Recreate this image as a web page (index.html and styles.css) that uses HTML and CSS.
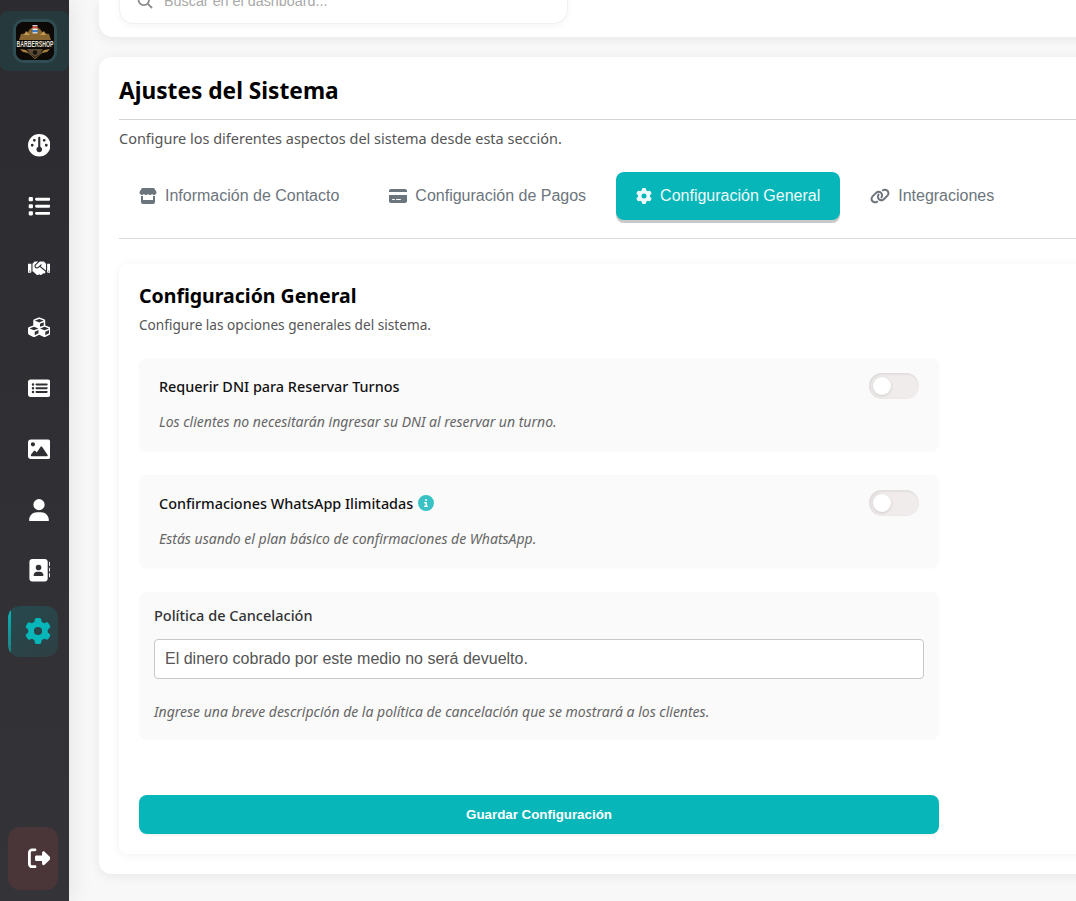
FILE: index.html
```html
<!DOCTYPE html>
<html lang="es">
<head>
<meta charset="utf-8">
<title>Ajustes del Sistema</title>
<link rel="stylesheet" href="styles.css">
</head>
<body>
<div class="app">
  <aside class="sidebar">
    <div class="brand">
      <div class="logo">
        <svg viewBox="0 0 38 38" width="38" height="38">
          <rect width="38" height="38" fill="#0c0906"/>
          <path d="M14 7l5-3 5 3 3 4 6 1 2 6h-32l2-6 6-1z" fill="#8a6631"/>
          <path d="M4 27l6 1 5 5 4 3 4-3 5-5 6-1-3 3-5 1-7 6-7-6-5-1z" fill="#a57f40"/>
          <path d="M11 27h16l-3 5-5 3-5-3z" fill="#5b4a36"/>
          <path d="M10 9l4 4h-6zM28 9l-4 4h6z" fill="#c39a54"/>
          <rect x="16.500" y="3" width="5" height="1.500" fill="#cfcfcf"/>
          <rect x="16.500" y="4.500" width="5" height="2" fill="#d8452f"/>
          <rect x="16.500" y="6.500" width="5" height="1.500" fill="#eeeeee"/>
          <rect x="16.500" y="8" width="5" height="2" fill="#3c7fd0"/>
          <rect x="16.500" y="10" width="5" height="1.500" fill="#cfcfcf"/>
          <text class="logo-text" text-anchor="middle" transform="translate(19 24.500) scale(1 1.800)">BARBERSHOP</text>
          <circle cx="19" cy="30.500" r="2.200" fill="#15110c"/>
        </svg>
      </div>
    </div>
    <nav class="nav">
      <a class="nav-item"><svg class="ico" viewBox="0 0 512 512"><path d="M0 256a256 256 0 1 1 512 0A256 256 0 1 1 0 256zm320 96c0-26.900-16.500-49.900-40-59.300V88c0-13.300-10.700-24-24-24s-24 10.700-24 24V292.700c-23.500 9.500-40 32.500-40 59.300c0 35.300 28.700 64 64 64s64-28.700 64-64zM144 176a32 32 0 1 0 0-64 32 32 0 1 0 0 64zm-16 80a32 32 0 1 0 -64 0 32 32 0 1 0 64 0zm288 32a32 32 0 1 0 0-64 32 32 0 1 0 0 64zM400 144a32 32 0 1 0 -64 0 32 32 0 1 0 64 0z"/></svg></a>
      <a class="nav-item"><svg class="ico" viewBox="0 0 512 512"><path d="M40 48C26.700 48 16 58.700 16 72v48c0 13.300 10.700 24 24 24H88c13.300 0 24-10.700 24-24V72c0-13.300-10.700-24-24-24H40zM192 64c-17.700 0-32 14.300-32 32s14.300 32 32 32H480c17.700 0 32-14.300 32-32s-14.300-32-32-32H192zm0 160c-17.700 0-32 14.300-32 32s14.300 32 32 32H480c17.700 0 32-14.300 32-32s-14.300-32-32-32H192zm0 160c-17.700 0-32 14.300-32 32s14.300 32 32 32H480c17.700 0 32-14.300 32-32s-14.300-32-32-32H192zM16 232v48c0 13.300 10.700 24 24 24H88c13.300 0 24-10.700 24-24V232c0-13.300-10.700-24-24-24H40c-13.300 0-24 10.700-24 24zM40 368c-13.300 0-24 10.700-24 24v48c0 13.300 10.700 24 24 24H88c13.300 0 24-10.700 24-24V392c0-13.300-10.700-24-24-24H40z"/></svg></a>
      <a class="nav-item"><svg class="ico ico-low" viewBox="0 0 640 512"><path d="M434.700 64h-85.900c-8 0-15.700 3-21.600 8.400l-98.300 90c-.1.100-.2.300-.3.400-16.600 15.600-16.300 40.500-2.100 56 12.700 13.900 39.400 17.600 56.100 2.700.1-.1.300-.1.400-.2l79.900-73.200c6.500-5.900 16.700-5.500 22.600 1 6 6.500 5.500 16.600-1 22.600l-26.100 23.900L504 313.800c2.900 2.400 5.500 5 7.900 7.700V128l-54.600-54.600c-5.900-6-14.100-9.400-22.600-9.400zM544 128.200v223.900c0 17.700 14.300 32 32 32h64V128.200h-96zm48 223.900c-8.800 0-16-7.200-16-16s7.200-16 16-16 16 7.200 16 16-7.200 16-16 16zM0 384h64c17.700 0 32-14.300 32-32V128.200H0V384zm48-63.900c8.800 0 16 7.200 16 16s-7.200 16-16 16-16-7.200-16-16c0-8.900 7.200-16 16-16zm435.900 18.600L334.600 217.500l-30 27.500c-29.700 27.100-75.200 24.500-101.700-4.400-26.900-29.400-24.800-74.900 4.400-101.700L289.100 64h-83.800c-8.500 0-16.600 3.400-22.600 9.400L128 128v223.900h18.300l90.500 81.900c27.400 22.300 67.700 18.100 90-9.300l.2-.2 17.900 15.500c15.900 13 39.400 10.500 52.300-5.400l31.400-38.600 5.400 4.400c13.700 11.100 33.900 9.100 45-4.700l9.500-11.700c11.200-13.800 9.100-33.900-4.600-45.100z"/></svg></a>
      <a class="nav-item"><svg class="ico" viewBox="0 0 512 512"><path d="M488.600 250.200L392 214V105.500c0-15-9.300-28.400-23.400-33.700l-100-37.500c-8.100-3.100-17.100-3.100-25.300 0l-100 37.500c-14.100 5.300-23.400 18.700-23.400 33.700V214l-96.600 36.200C9.300 255.500 0 268.900 0 283.900V394c0 13.600 7.700 26.100 19.900 32.200l100 50c10.100 5.100 22.100 5.100 32.200 0l103.900-52 103.900 52c10.100 5.100 22.100 5.100 32.200 0l100-50c12.200-6.100 19.900-18.600 19.900-32.200V283.900c0-15-9.300-28.400-23.400-33.700zM358 214.800l-85 31.900v-68.200l85-37v73.300zM154 104.100l102-38.200 102 38.200v.6l-102 41.400-102-41.400v-.6zm84 291.100l-85 42.500v-79.100l85-38.800v75.400zm0-112l-102 41.400-102-41.400v-.6l102-38.200 102 38.200v.6zm240 112l-85 42.500v-79.100l85-38.800v75.400zm0-112l-102 41.400-102-41.400v-.6l102-38.200 102 38.200v.6z"/></svg></a>
      <a class="nav-item"><svg class="ico" viewBox="0 0 576 512"><path d="M64 32C28.700 32 0 60.700 0 96V416c0 35.300 28.700 64 64 64H512c35.300 0 64-28.700 64-64V96c0-35.300-28.700-64-64-64H64zM96 160a32 32 0 1 1 64 0a32 32 0 1 1 -64 0zM96 256a32 32 0 1 1 64 0a32 32 0 1 1 -64 0zM96 352a32 32 0 1 1 64 0a32 32 0 1 1 -64 0zM216 136H480c13.300 0 24 10.700 24 24s-10.700 24-24 24H216c-13.300 0-24-10.700-24-24s10.700-24 24-24zM216 232H480c13.300 0 24 10.700 24 24s-10.700 24-24 24H216c-13.300 0-24-10.700-24-24s10.700-24 24-24zM216 328H480c13.300 0 24 10.700 24 24s-10.700 24-24 24H216c-13.300 0-24-10.700-24-24s10.700-24 24-24z"/></svg></a>
      <a class="nav-item"><svg class="ico" viewBox="0 0 512 512"><path d="M0 96C0 60.700 28.700 32 64 32H448c35.300 0 64 28.700 64 64V416c0 35.300-28.700 64-64 64H64c-35.300 0-64-28.700-64-64V96zM323.800 202.500c-4.500-6.600-11.900-10.500-19.800-10.500s-15.400 3.900-19.800 10.500l-87 127.600L170.700 297c-4.600-5.700-11.500-9-18.700-9s-14.200 3.300-18.700 9l-64 80c-5.800 7.200-6.900 17.100-2.900 25.400s12.400 13.600 21.600 13.600h96 32H424c8.900 0 17.100-4.900 21.200-12.800s3.600-17.400-1.400-24.700l-120-176zM112 192a48 48 0 1 0 0-96 48 48 0 1 0 0 96z"/></svg></a>
      <a class="nav-item"><svg class="ico ico-narrow" viewBox="0 0 448 512"><path d="M224 256A128 128 0 1 0 224 0a128 128 0 1 0 0 256zm-45.700 48C79.800 304 0 383.800 0 482.300C0 498.700 13.300 512 29.700 512H418.300c16.400 0 29.700-13.300 29.700-29.700C448 383.800 368.200 304 269.700 304H178.300z"/></svg></a>
      <a class="nav-item"><svg class="ico" viewBox="0 0 512 512"><path d="M96 0C60.700 0 32 28.700 32 64V448c0 35.300 28.700 64 64 64H384c35.300 0 64-28.700 64-64V64c0-35.300-28.700-64-64-64H96zM208 288h64c44.200 0 80 35.800 80 80c0 8.800-7.200 16-16 16H144c-8.800 0-16-7.200-16-16c0-44.200 35.800-80 80-80zm-32-96a64 64 0 1 1 128 0 64 64 0 1 1 -128 0zM512 80c0-8.800-7.200-16-16-16s-16 7.200-16 16v64c0 8.800 7.200 16 16 16s16-7.200 16-16V80zM496 192c-8.800 0-16 7.200-16 16v64c0 8.800 7.200 16 16 16s16-7.200 16-16V208c0-8.800-7.200-16-16-16zm16 144c0-8.800-7.200-16-16-16s-16 7.200-16 16v64c0 8.800 7.200 16 16 16s16-7.200 16-16V336z"/></svg></a>
      <a class="nav-item active"><svg class="ico ico-gear" viewBox="0 0 512 512"><path d="M495.900 166.600c3.200 8.700 .5 18.400-6.400 24.600l-43.300 39.400c1.100 8.300 1.700 16.800 1.700 25.400s-.6 17.100-1.700 25.400l43.300 39.400c6.900 6.200 9.600 15.900 6.400 24.600c-4.400 11.900-9.700 23.300-15.800 34.300l-4.700 8.100c-6.600 11-14 21.400-22.100 31.200c-5.900 7.200-15.700 9.600-24.500 6.800l-55.700-17.700c-13.400 10.300-28.200 18.900-44 25.400l-12.500 57.100c-2 9.100-9 16.300-18.200 17.800c-13.800 2.300-28 3.500-42.500 3.500s-28.700-1.200-42.500-3.500c-9.200-1.500-16.200-8.700-18.200-17.800l-12.500-57.100c-15.800-6.500-30.600-15.100-44-25.400L83.100 425.900c-8.800 2.800-18.600 .3-24.500-6.800c-8.100-9.800-15.500-20.200-22.100-31.200l-4.700-8.100c-6.100-11-11.400-22.400-15.800-34.300c-3.200-8.700-.5-18.400 6.400-24.600l43.300-39.400C64.600 273.100 64 264.600 64 256s.6-17.100 1.700-25.400L22.400 191.200c-6.900-6.200-9.600-15.900-6.400-24.600c4.400-11.900 9.700-23.300 15.800-34.300l4.700-8.100c6.600-11 14-21.400 22.100-31.200c5.900-7.200 15.700-9.600 24.500-6.800l55.700 17.700c13.400-10.300 28.200-18.900 44-25.400l12.500-57.100c2-9.100 9-16.300 18.200-17.800C227.300 1.200 241.500 0 256 0s28.700 1.200 42.500 3.500c9.200 1.500 16.200 8.700 18.200 17.800l12.500 57.100c15.800 6.500 30.600 15.100 44 25.400l55.700-17.700c8.800-2.800 18.600-.3 24.500 6.800c8.100 9.800 15.500 20.200 22.100 31.200l4.700 8.100c6.100 11 11.400 22.400 15.800 34.300zM256 336a80 80 0 1 0 0-160 80 80 0 1 0 0 160z"/></svg></a>
    </nav>
    <a class="logout"><svg class="ico" viewBox="0 0 512 512"><path d="M377.900 105.900L500.700 228.700c7.200 7.200 11.300 17.100 11.300 27.300s-4.100 20.100-11.300 27.300L377.900 406.100c-6.400 6.400-15 9.900-24 9.900c-18.700 0-33.900-15.200-33.900-33.900l0-62.100-128 0c-17.700 0-32-14.300-32-32l0-64c0-17.700 14.300-32 32-32l128 0 0-62.100c0-18.700 15.200-33.900 33.900-33.900c9 0 17.600 3.600 24 9.900zM160 96L96 96c-17.700 0-32 14.300-32 32l0 256c0 17.700 14.300 32 32 32l64 0c17.700 0 32 14.300 32 32s-14.300 32-32 32l-64 0c-53 0-96-43-96-96L0 128C0 75 43 32 96 32l64 0c17.700 0 32 14.300 32 32s-14.300 32-32 32z"/></svg></a>
  </aside>

  <main class="main">
    <header class="topbar">
      <div class="search">
        <svg class="search-ico" viewBox="0 0 16 16"><circle cx="6.800" cy="6.800" r="5.300"/><path d="M10.800 10.800L15 15"/></svg>
        <span class="search-ph">Buscar en el dashboard...</span>
      </div>
    </header>

    <section class="panel">
      <h1 class="panel-title">Ajustes del Sistema</h1>
      <p class="panel-sub">Configure los diferentes aspectos del sistema desde esta sección.</p>

      <div class="tabs">
        <a class="tab"><svg class="tab-ico w18" viewBox="0 0 576 512"><path d="M547.600 103.800L490.300 13.100C485.200 5 476.100 0 466.400 0H109.600C99.900 0 90.800 5 85.700 13.100L28.300 103.800c-29.600 46.800-3.400 111.900 51.900 119.400c4 .5 8.100 .8 12.100 .8c26.100 0 49.300-11.400 65.200-29c15.900 17.600 39.100 29 65.200 29c26.100 0 49.300-11.400 65.200-29c15.900 17.600 39.100 29 65.200 29c26.200 0 49.300-11.400 65.200-29c16 17.600 39.100 29 65.200 29c4.100 0 8.100-.3 12.100-.8c55.500-7.400 81.800-72.500 52.100-119.400zM499.700 254.900l-.1 0c-5.300 .7-10.700 1.100-16.200 1.100c-12.400 0-24.300-1.900-35.400-5.300V384H128V250.600c-11.200 3.500-23.200 5.400-35.600 5.400c-5.500 0-11-.4-16.300-1.100l-.1 0c-4.100-.6-8.100-1.300-12-2.300V384v64c0 35.300 28.700 64 64 64H448c35.300 0 64-28.700 64-64V384 252.600c-4 1-8 1.800-12.300 2.300z"/></svg>Información de Contacto</a>
        <a class="tab"><svg class="tab-ico w18" viewBox="0 0 576 512"><path d="M64 32C28.700 32 0 60.700 0 96v32H576V96c0-35.300-28.700-64-64-64H64zM576 224H0V416c0 35.300 28.700 64 64 64H512c35.300 0 64-28.700 64-64V224zM112 352h64c8.800 0 16 7.200 16 16s-7.200 16-16 16H112c-8.800 0-16-7.200-16-16s7.200-16 16-16zm112 16c0-8.800 7.200-16 16-16H368c8.800 0 16 7.200 16 16s-7.200 16-16 16H240c-8.800 0-16-7.200-16-16z"/></svg>Configuración de Pagos</a>
        <a class="tab tab-active"><svg class="tab-ico w16" viewBox="0 0 512 512"><path d="M495.900 166.600c3.200 8.700 .5 18.400-6.400 24.600l-43.300 39.400c1.100 8.300 1.700 16.800 1.700 25.400s-.6 17.100-1.700 25.400l43.300 39.400c6.900 6.200 9.600 15.900 6.400 24.600c-4.400 11.900-9.700 23.300-15.800 34.300l-4.700 8.100c-6.600 11-14 21.400-22.100 31.200c-5.900 7.200-15.700 9.600-24.500 6.800l-55.700-17.700c-13.400 10.300-28.200 18.900-44 25.400l-12.500 57.100c-2 9.100-9 16.300-18.200 17.800c-13.800 2.300-28 3.500-42.500 3.500s-28.700-1.200-42.500-3.500c-9.200-1.500-16.200-8.700-18.200-17.800l-12.500-57.100c-15.800-6.500-30.600-15.100-44-25.400L83.100 425.900c-8.800 2.800-18.600 .3-24.500-6.800c-8.100-9.800-15.500-20.200-22.100-31.200l-4.700-8.100c-6.100-11-11.400-22.400-15.800-34.300c-3.200-8.700-.5-18.400 6.400-24.600l43.300-39.400C64.600 273.100 64 264.600 64 256s.6-17.100 1.700-25.400L22.400 191.200c-6.900-6.200-9.600-15.900-6.400-24.600c4.400-11.900 9.700-23.300 15.800-34.300l4.700-8.100c6.600-11 14-21.400 22.100-31.200c5.900-7.200 15.700-9.600 24.500-6.800l55.700 17.700c13.400-10.300 28.200-18.900 44-25.400l12.500-57.100c2-9.100 9-16.300 18.200-17.800C227.300 1.200 241.500 0 256 0s28.700 1.200 42.500 3.500c9.200 1.500 16.200 8.700 18.200 17.800l12.500 57.100c15.800 6.500 30.600 15.100 44 25.400l55.700-17.700c8.800-2.800 18.600-.3 24.500 6.800c8.100 9.800 15.500 20.200 22.100 31.200l4.700 8.100c6.100 11 11.400 22.400 15.800 34.300zM256 336a80 80 0 1 0 0-160 80 80 0 1 0 0 160z"/></svg>Configuración General</a>
        <a class="tab"><svg class="tab-ico w20" viewBox="0 0 640 512"><path d="M579.800 267.700c56.500-56.500 56.500-148 0-204.500c-50-50-128.800-56.500-186.300-15.400l-1.600 1.100c-14.400 10.300-17.700 30.300-7.400 44.600s30.300 17.700 44.600 7.400l1.600-1.100c32.100-22.900 76-19.300 103.800 8.600c31.500 31.500 31.500 82.500 0 114L422.300 334.800c-31.500 31.500-82.500 31.500-114 0c-27.900-27.900-31.500-71.800-8.600-103.800l1.100-1.600c10.300-14.400 6.900-34.400-7.400-44.600s-34.400-6.900-44.600 7.400l-1.100 1.600C206.500 251.200 213 330 263 380c56.500 56.500 148 56.500 204.500 0L579.800 267.700zM60.200 244.300c-56.500 56.500-56.500 148 0 204.500c50 50 128.800 56.500 186.300 15.400l1.600-1.100c14.400-10.300 17.700-30.300 7.400-44.600s-30.300-17.700-44.600-7.400l-1.600 1.100c-32.100 22.900-76 19.300-103.800-8.600C74 372 74 321 105.500 289.500L217.700 177.200c31.500-31.500 82.500-31.500 114 0c27.900 27.900 31.500 71.800 8.600 103.900l-1.100 1.600c-10.300 14.400-6.900 34.400 7.400 44.600s34.400 6.900 44.600-7.400l1.100-1.600C433.500 260.800 427 182 377 132c-56.500-56.500-148-56.500-204.500 0L60.200 244.300z"/></svg>Integraciones</a>
      </div>

      <div class="card">
        <h2 class="card-title">Configuración General</h2>
        <p class="card-sub">Configure las opciones generales del sistema.</p>

        <div class="option">
          <div class="option-head">
            <span class="option-label">Requerir DNI para Reservar Turnos</span>
            <span class="switch"></span>
          </div>
          <p class="option-help">Los clientes no necesitarán ingresar su DNI al reservar un turno.</p>
        </div>

        <div class="option">
          <div class="option-head">
            <span class="option-label">Confirmaciones WhatsApp Ilimitadas<svg class="info" viewBox="0 0 512 512"><path d="M256 512A256 256 0 1 0 256 0a256 256 0 1 0 0 512zM216 336h24V272H216c-13.300 0-24-10.700-24-24s10.700-24 24-24h48c13.300 0 24 10.700 24 24v88h8c13.300 0 24 10.700 24 24s-10.700 24-24 24H216c-13.300 0-24-10.700-24-24s10.700-24 24-24zm40-208a32 32 0 1 1 0 64 32 32 0 1 1 0-64z"/></svg></span>
            <span class="switch"></span>
          </div>
          <p class="option-help">Estás usando el plan básico de confirmaciones de WhatsApp.</p>
        </div>

        <div class="policy">
          <label class="policy-label" for="policy">Política de Cancelación</label>
          <input class="policy-input" id="policy" type="text" value="El dinero cobrado por este medio no será devuelto.">
          <p class="policy-help">Ingrese una breve descripción de la política de cancelación que se mostrará a los clientes.</p>
        </div>

        <button class="save" type="button">Guardar Configuración</button>
      </div>
    </section>
  </main>
</div>
</body>
</html>
```

FILE: styles.css
```css
* { box-sizing: border-box; }
html, body { margin: 0; height: 100%; overflow: hidden; }
body { background: #f8f8f9; font-family: "Noto Sans", sans-serif; }
p, h1, h2 { margin: 0; }
a { display: flex; }

.app { display: flex; width: 1076px; height: 901px; overflow: hidden; }

/* Sidebar */
.sidebar {
  width: 69px; flex: none; height: 901px;
  display: flex; flex-direction: column;
  padding-top: 11px;
  background: linear-gradient(180deg, #2c2c30 0%, #333338 100%);
  box-shadow: 4px 0 20px rgba(0, 0, 0, .08);
  position: relative; z-index: 2;
}
.brand {
  height: 60px; background: #263a3e; border-radius: 8px;
  display: flex; align-items: center; justify-content: center; padding-left: 1px;
}
.logo {
  width: 44px; height: 44px; border-radius: 11px; border: 3px solid #2f4d52;
  overflow: hidden; background: #0c0906;
  display: flex; align-items: center; justify-content: center;
}
.logo-text { font: 700 5.200px "Liberation Sans", sans-serif; fill: #e5e1d8; }
.nav { display: flex; flex-direction: column; gap: 10px; margin-top: 49px; padding-left: 8px; }
.nav-item, .logout {
  width: 50px; border-radius: 12px; align-items: center; justify-content: flex-end;
  padding-right: 8px; fill: #fff;
}
.nav-item { height: 50.750px; }
.ico { width: 22.500px; height: 22.500px; fill: #fff; display: block; }
.ico-low { margin-top: 3px; }
.ico-narrow { width: 20px; margin-right: 1px; }
.active {
  background:
    linear-gradient(180deg, #06b6b9, #1f7c7f) left / 3px 100% no-repeat,
    linear-gradient(150deg, #26494e 0%, #2e3f43 100%);
  padding-right: 7px;
}
.ico-gear { width: 26px; height: 26px; fill: #06b6b9; }
.logout {
  height: 63px; margin: auto 0 11px 8px; background: #4a3639;
}

/* Main */
.main { flex: none; width: 1100px; margin-left: 30px; }
.topbar {
  height: 37px; background: #fff; border-radius: 0 0 14px 14px;
  box-shadow: 0 2px 12px rgba(0, 0, 0, .07);
  padding: 0 20px 13px; display: flex; align-items: flex-end;
}
.search {
  flex: none; width: 449px; height: 46px; border: 1px solid #f1f1f1; border-radius: 14px;
  background: #fff; box-shadow: 0 2px 6px rgba(0, 0, 0, .04);
  display: flex; align-items: center; padding: 0 17px; gap: 11px;
  font: 14.350px "Liberation Sans", sans-serif;
}
.search-ico { width: 16px; height: 16px; fill: none; stroke: #8c8c8c; stroke-width: 1.800; flex: none; }
.search-ph { color: #a9a9a9; }

.panel {
  margin-top: 20px; height: 817px; background: #fff; border-radius: 12px;
  box-shadow: 0 2px 12px rgba(0, 0, 0, .07);
  padding: 0 20px;
}
.panel-title {
  height: 63px; padding-top: 17px; border-bottom: 1px solid #d4d4d4;
  font-size: 22.700px; line-height: 33px; font-weight: 700; color: #000;
}
.panel-sub { margin-top: 9px; font-size: 14.470px; line-height: 20px; color: #555; }

.tabs {
  margin-top: 23px; padding-bottom: 18px; display: flex; gap: 10px;
  border-bottom: 1px solid #d9d9d9;
}
.tab {
  height: 48px; padding: 0 20px; align-items: center; gap: 8px; border-radius: 8px;
  font: 16px "Liberation Sans", sans-serif; color: #6c757d; fill: #6c757d;
}
.tab-ico { height: 16px; flex: none; }
.w16 { width: 16px; } .w18 { width: 18px; } .w20 { width: 20px; }
.tab-active { background: #06b6b9; color: #eefafa; fill: #eefafa; box-shadow: 0 3px 0 #c9c9c9; }

.card {
  margin-top: 25px; height: 590px; padding: 19px 20px 20px; border-radius: 8px; background: #fff;
  box-shadow: 0 1px 8px rgba(0, 0, 0, .06);
}
.card-title { font-size: 19.500px; line-height: 26px; font-weight: 700; color: #000; }
.card-sub { margin-top: 7px; font-size: 13.640px; line-height: 18px; color: #555; }

.option {
  width: 800px; height: 93px; margin-top: 24px; padding: 15px 20px; border-radius: 8px;
  background: #fafafa; box-shadow: 0 1px 3px rgba(0, 0, 0, .02);
}
.option-head { display: flex; justify-content: space-between; align-items: center; height: 26px; }
.option-label { display: flex; align-items: center; gap: 5px; font-size: 14.400px; font-weight: 500; color: #111; }
.info { width: 16px; height: 16px; fill: #38c2c6; }
.switch {
  width: 50px; height: 26px; border-radius: 13px; background: #f1ecec; display: block; flex: none;
  box-shadow: inset 1px 1px 3px rgba(0, 0, 0, .1);
  padding: 4px;
}
.switch::before {
  content: ""; display: block; width: 18px; height: 18px; border-radius: 50%; background: #fff;
  box-shadow: 0 1px 3px rgba(0, 0, 0, .15);
}
.option-help { margin-top: 13.500px; font-size: 14px; line-height: 18px; font-style: italic; color: #666; }

.policy {
  width: 800px; height: 147.500px; margin-top: 24px; padding: 14px 15px; border-radius: 8px; background: #fafafa;
}
.policy-label { display: block; font-size: 14.500px; line-height: 19px; font-weight: 500; color: #333; }
.policy-input {
  display: block; width: 770px; height: 40px; margin-top: 14px; padding: 0 10px;
  border: 1px solid #c8c8c8; border-radius: 4px; background: #fff;
  font: 16px "Liberation Sans", sans-serif; color: #555; outline: none;
}
.policy-help { margin-top: 24px; font-size: 14px; line-height: 18px; font-style: italic; color: #666; }

.save {
  display: block; width: 800px; height: 39px; margin-top: 55.500px; border: 0; border-radius: 8px;
  background: #06b6b9; color: #fff; font: 700 13.333px "Liberation Sans", sans-serif;
  box-shadow: 0 1px 3px rgba(0, 0, 0, .08);
}
```
